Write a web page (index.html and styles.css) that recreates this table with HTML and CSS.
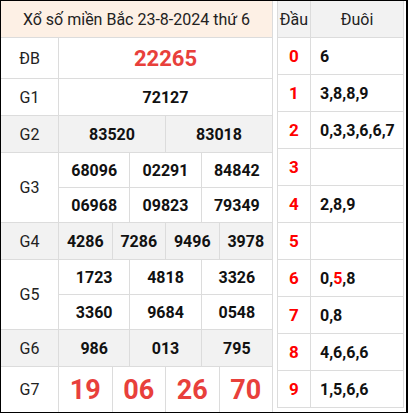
FILE: index.html
```html
<!DOCTYPE html>
<html lang="vi">
<head>
<meta charset="utf-8">
<title>Xổ số miền Bắc 23-8-2024</title>
<link rel="stylesheet" href="styles.css">
</head>
<body>
<div class="frame">
  <div class="results">
    <div class="title">Xổ số miền Bắc 23-8-2024 thứ 6</div>

    <div class="lbl">ĐB</div>
    <div class="num s12 special">22265</div>

    <div class="lbl">G1</div>
    <div class="num s12">72127</div>

    <div class="lbl alt">G2</div>
    <div class="num s6 alt">83520</div>
    <div class="num s6 alt">83018</div>

    <div class="lbl r2">G3</div>
    <div class="num s4">68096</div>
    <div class="num s4">02291</div>
    <div class="num s4">84842</div>
    <div class="num s4">06968</div>
    <div class="num s4">09823</div>
    <div class="num s4">79349</div>

    <div class="lbl alt">G4</div>
    <div class="num s3 alt">4286</div>
    <div class="num s3 alt">7286</div>
    <div class="num s3 alt">9496</div>
    <div class="num s3 alt">3978</div>

    <div class="lbl r2">G5</div>
    <div class="num s4">1723</div>
    <div class="num s4">4818</div>
    <div class="num s4">3326</div>
    <div class="num s4">3360</div>
    <div class="num s4">9684</div>
    <div class="num s4">0548</div>

    <div class="lbl alt">G6</div>
    <div class="num s4 alt">986</div>
    <div class="num s4 alt">013</div>
    <div class="num s4 alt">795</div>

    <div class="lbl">G7</div>
    <div class="num s3 big">19</div>
    <div class="num s3 big">06</div>
    <div class="num s3 big">26</div>
    <div class="num s3 big">70</div>
  </div>

  <div class="loto">
    <div class="head">Đầu</div>
    <div class="head">Đuôi</div>

    <div class="dau">0</div><div class="duoi">6</div>
    <div class="dau">1</div><div class="duoi">3,8,8,9</div>
    <div class="dau">2</div><div class="duoi">0,3,3,6,6,7</div>
    <div class="dau">3</div><div class="duoi"></div>
    <div class="dau">4</div><div class="duoi">2,8,9</div>
    <div class="dau">5</div><div class="duoi"></div>
    <div class="dau">6</div><div class="duoi">0,<span class="hit">5</span>,8</div>
    <div class="dau">7</div><div class="duoi">0,8</div>
    <div class="dau">8</div><div class="duoi">4,6,6,6</div>
    <div class="dau">9</div><div class="duoi">1,5,6,6</div>
  </div>
</div>
</body>
</html>
```

FILE: styles.css
```css
* { box-sizing: border-box; }

html, body {
  margin: 0;
  padding: 0;
  background: #fff;
}

body {
  font-family: Roboto, "Liberation Sans", Arial, sans-serif;
  color: #111;
}

.frame {
  width: 408px;
  height: 413px;
  border: 1px solid #000;
  border-right-width: 2px;
  display: flex;
  align-items: flex-start;
  gap: 4px;
  overflow: hidden;
}

/* left results table */
.results {
  width: 272px;
  display: grid;
  grid-template-columns: 57px repeat(12, 1fr);
  grid-template-rows: 36px 40px 36px 36px 34px 34px 36px 34px 34px 36px 45px;
  gap: 1px;
  background: #dcdcdc;
  border-right: 1px solid #dcdcdc;
}

.results > div {
  background: #fff;
  display: flex;
  align-items: center;
  justify-content: center;
}

.title {
  grid-column: 1 / -1;
  background: #fdf0e5 !important;
  font-size: 16px;
  color: #222;
}

.lbl {
  grid-column: 1;
  font-size: 16px;
  color: #222;
}

.r2 { grid-row: span 2; }

.num {
  font-weight: 700;
  font-size: 16px;
  color: #111;
}

.s12 { grid-column: span 12; }
.s6 { grid-column: span 6; }
.s4 { grid-column: span 4; }
.s3 { grid-column: span 3; }

.results > .alt { background: #f2f2f2; }

.special {
  font-size: 22px;
  color: #e8403b;
}

.big {
  font-size: 27px;
  color: #e8403b;
}

/* right loto table */
.loto {
  width: 127px;
  display: grid;
  grid-template-columns: 32px 1fr;
  grid-auto-rows: 36px;
  gap: 1px;
  background: #dcdcdc;
  border: 1px solid #dcdcdc;
  border-top: 0;
}

.loto > div {
  background: #fff;
  display: flex;
  align-items: center;
}

.loto > .head {
  background: #f2f2f2;
  justify-content: center;
  font-size: 16px;
  color: #222;
}

.dau {
  justify-content: center;
  color: #ff0000;
  font-weight: 700;
  font-size: 17px;
}

.duoi {
  padding-left: 9px;
  font-weight: 700;
  font-size: 16px;
  color: #111;
}

.hit { color: #ff0000; }
```
